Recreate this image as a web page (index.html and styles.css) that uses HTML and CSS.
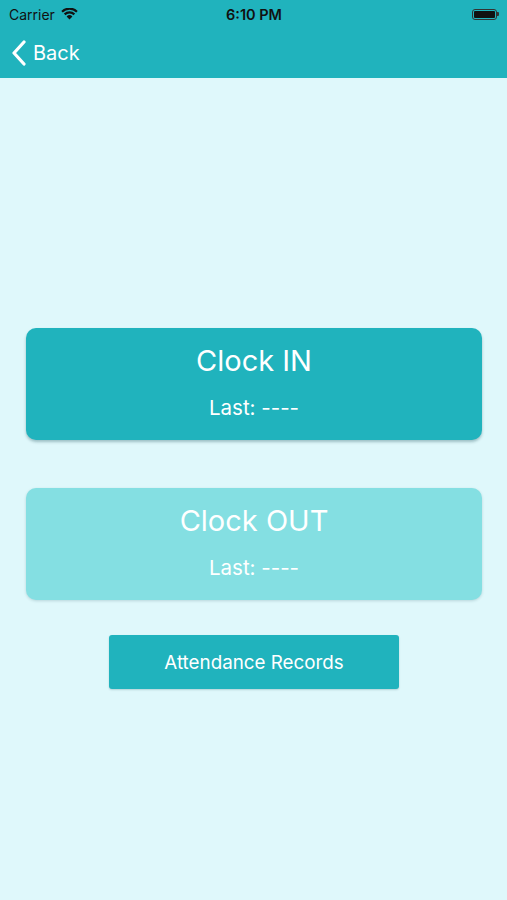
FILE: index.html
```html
<!DOCTYPE html>
<html lang="en">
<head>
    <meta charset="UTF-8">
    <meta name="viewport" content="width=device-width, initial-scale=1.0">
    <title>Clock</title>
    <link rel="stylesheet" href="styles.css">
</head>
<body>
    <header class="topbar">
        <div class="status">
            <div class="status-left">
                <span>Carrier</span>
                <svg class="wifi" width="17" height="12" viewBox="0 0 17 12">
                    <path d="M8.5 11.5 L5.6 8.4 A4.2 4.2 0 0 1 11.4 8.4 Z" fill="#111"/>
                    <path d="M2.9 5.6 A8 8 0 0 1 14.1 5.6 L12.6 7.2 A5.9 5.9 0 0 0 4.4 7.2 Z" fill="#111"/>
                    <path d="M0.3 2.9 A11.8 11.8 0 0 1 16.7 2.9 L15.2 4.5 A9.6 9.6 0 0 0 1.8 4.5 Z" fill="#111"/>
                </svg>
            </div>
            <div class="status-time">6:10 PM</div>
            <div class="status-right">
                <div class="battery"><div class="battery-fill"></div></div>
                <div class="battery-tip"></div>
            </div>
        </div>
        <nav class="navbar">
            <a class="back" href="#">
                <svg width="16" height="26" viewBox="0 0 16 26">
                    <path d="M13 2 L3 13 L13 24" fill="none" stroke="#fff" stroke-width="3.2" stroke-linecap="round" stroke-linejoin="round"/>
                </svg>
                <span>Back</span>
            </a>
        </nav>
    </header>

    <main class="content">
        <button class="clock-card">
            <span class="clock-title">Clock IN</span>
            <span class="clock-last">Last: ----</span>
        </button>
        <button class="clock-card disabled">
            <span class="clock-title">Clock OUT</span>
            <span class="clock-last">Last: ----</span>
        </button>
        <button class="records">Attendance Records</button>
    </main>
</body>
</html>
```

FILE: styles.css
```css
body {
    margin: 0;
    font-family: Inter, "Noto Sans", Arial, sans-serif;
    background-color: #dff8fb;
    min-height: 900px;
}
.topbar {
    background-color: #20b3bd;
    height: 78px;
}
.status {
    height: 28px;
    display: flex;
    align-items: center;
    justify-content: space-between;
    padding: 0 8px 0 9px;
    font-size: 14px;
    color: #111;
}
.status-left {
    display: flex;
    align-items: center;
    gap: 6px;
    width: 120px;
}
.status-time {
    font-weight: 600;
    font-size: 14.5px;
}
.status-right {
    width: 120px;
    display: flex;
    justify-content: flex-end;
    align-items: center;
}
.battery {
    width: 25px;
    height: 11px;
    border: 1px solid #333;
    border-radius: 3px;
    padding: 1px;
    box-sizing: border-box;
}
.battery-fill {
    background-color: #111;
    height: 100%;
    border-radius: 1px;
}
.battery-tip {
    width: 2px;
    height: 4px;
    background-color: #333;
    border-radius: 0 1px 1px 0;
}
.navbar {
    height: 50px;
    display: flex;
    align-items: center;
    padding-left: 11px;
}
.back {
    display: flex;
    align-items: center;
    gap: 6px;
    color: #fff;
    text-decoration: none;
    font-size: 20px;
}
.content {
    display: flex;
    flex-direction: column;
    align-items: center;
    padding: 250px 25px 0 26px;
}
.clock-card {
    width: 100%;
    height: 112px;
    border: none;
    border-radius: 10px;
    background-color: #20b3bd;
    color: #fff;
    font-family: inherit;
    display: flex;
    flex-direction: column;
    align-items: center;
    padding: 15px 0 0;
    box-shadow: 0 2px 3px rgba(0, 60, 70, 0.3);
    margin-bottom: 48px;
    cursor: pointer;
}
.clock-card.disabled {
    background-color: #84dfe2;
    box-shadow: 0 1px 3px rgba(0, 60, 70, 0.18);
    margin-bottom: 35px;
}
.clock-title {
    font-size: 29px;
    line-height: 36px;
}
.clock-last {
    font-size: 20.5px;
    line-height: 26px;
    margin-top: 16px;
}
.records {
    width: 290px;
    height: 54px;
    border: none;
    border-radius: 3px;
    background-color: #20b3bd;
    color: #fff;
    font-family: inherit;
    font-size: 18.8px;
    box-shadow: 0 1px 2px rgba(0, 60, 70, 0.2);
    cursor: pointer;
}
```
